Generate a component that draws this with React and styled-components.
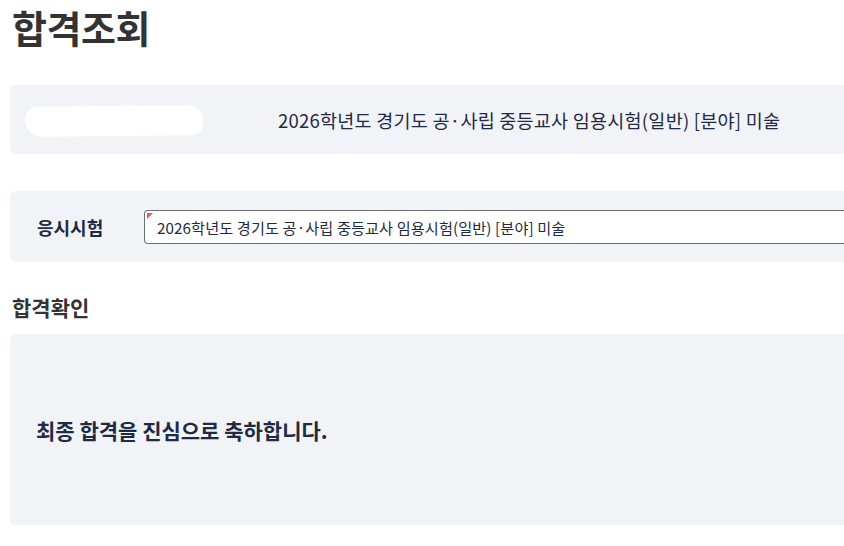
import React from "react";
import styled, { createGlobalStyle } from "styled-components";

const Global = createGlobalStyle`
  html, body { margin: 0; padding: 0; background: #fff; overflow: hidden; }
  body { font-family: "Noto Sans CJK KR", "Noto Sans", sans-serif; }
`;

const Page = styled.div`
  width: 1000px;
  padding: 0 0 0 10px;
  box-sizing: border-box;
  display: flex;
  flex-direction: column;
`;

const Title = styled.h1`
  margin: 0;
  padding: 5px 0 0 2px;
  font-size: 38px;
  line-height: 44px;
  font-weight: 700;
  color: #333;
  letter-spacing: -0.5px;
`;

const Panel = styled.div`
  background: #f2f3f7;
  border-radius: 6px;
  display: flex;
  align-items: center;
  box-sizing: border-box;
  height: ${(p) => p.$h}px;
  margin-top: ${(p) => p.$mt}px;
  padding: 0 0 0 ${(p) => p.$pl}px;
`;

const Redacted = styled.div`
  width: 178px;
  height: 30px;
  margin-top: 2px;
  background: #fff;
  border-radius: 14px 16px 12px 18px;
  transform: rotate(-0.6deg);
  flex: none;
`;

const ExamName = styled.div`
  margin-left: 75px;
  font-size: 18.5px;
  letter-spacing: 0.25px;
  color: #1f2a44;
  white-space: nowrap;
`;

const Label = styled.div`
  width: 107px;
  flex: none;
  font-size: 18px;
  font-weight: 700;
  color: #1f2a44;
`;

const SelectBox = styled.div`
  position: relative;
  flex: 1;
  height: 34px;
  border: 1px solid #6f7075;
  border-right: none;
  border-radius: 4px 0 0 4px;
  background: #fff;
  box-sizing: border-box;
  display: flex;
  align-items: center;
  padding-left: 12px;
  font-size: 15.2px;
  letter-spacing: 0.1px;
  color: #1f2a44;
  white-space: nowrap;
`;

const Marker = styled.span`
  position: absolute;
  left: 2px;
  top: 2px;
  width: 0;
  height: 0;
  border-top: 6px solid #e0614f;
  border-right: 6px solid transparent;
`;

const SubTitle = styled.h2`
  margin: 31px 0 0 2px;
  font-size: 21px;
  line-height: 28px;
  font-weight: 700;
  color: #333;
`;

const Congrats = styled.div`
  font-size: 21px;
  font-weight: 700;
  color: #1f2a44;
`;

export default function App() {
  return (
    <>
      <Global />
      <Page>
        <Title>합격조회</Title>
        <Panel $h={69} $mt={36} $pl={15}>
          <Redacted />
          <ExamName>2026학년도 경기도 공·사립 중등교사 임용시험(일반) [분야] 미술</ExamName>
        </Panel>
        <Panel $h={71} $mt={37} $pl={27}>
          <Label>응시시험</Label>
          <SelectBox>
            <Marker />
            2026학년도 경기도 공·사립 중등교사 임용시험(일반) [분야] 미술
          </SelectBox>
        </Panel>
        <SubTitle>합격확인</SubTitle>
        <Panel $h={191} $mt={13} $pl={26}>
          <Congrats>최종 합격을 진심으로 축하합니다.</Congrats>
        </Panel>
      </Page>
    </>
  );
}
